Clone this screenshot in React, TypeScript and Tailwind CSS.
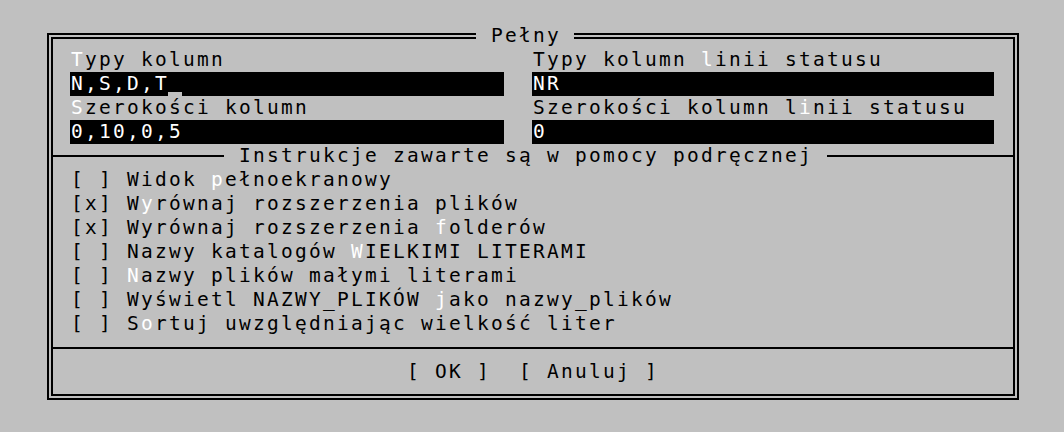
import React from "react";

const font = "font-['DejaVu_Sans_Mono',monospace] text-[19.5px] leading-[24px] tracking-[2.26px] whitespace-pre";

// "&x" marks the hotkey letter, drawn in white
function Hot({ t }: { t: string }) {
  const i = t.indexOf("&");
  if (i < 0) return <>{t}</>;
  return (
    <>
      {t.slice(0, i)}
      <span className="text-white">{t[i + 1]}</span>
      {t.slice(i + 2)}
    </>
  );
}

function Field({ value, cursor, w }: { value: string; cursor?: boolean; w: string }) {
  return (
    <div className={`flex h-[24px] bg-black text-white ${w}`}>
      <span className="pl-[1px]">{value}</span>
      {cursor && <span className="self-end -ml-[1px] w-[14px] h-[4px] bg-[#c0c0c0]" />}
    </div>
  );
}

const checks = [
  "[ ] Widok &pełnoekranowy",
  "[x] W&yrównaj rozszerzenia plików",
  "[x] Wyrównaj rozszerzenia &folderów",
  "[ ] Nazwy katalogów &WIELKIMI LITERAMI",
  "[ ] &Nazwy plików małymi literami",
  "[ ] Wyświetl NAZWY_PLIKÓW &jako nazwy_plików",
  "[ ] S&ortuj uwzględniając wielkość liter",
];

export default function App() {
  return (
    <div className={`relative w-[1064px] h-[432px] bg-[#c0c0c0] text-black pt-[33px] pl-[47px] ${font}`}>
      <div className="w-[972px] h-[367px] border-2 border-black p-[2px]">
        <div className="h-full border-2 border-black pt-[9px] flex flex-col">
          <div className="flex pl-[18px] gap-[28px] h-[24px]">
            <div className="w-[434px]"><Hot t="&Typy kolumn" /></div>
            <div><Hot t="Typy kolumn &linii statusu" /></div>
          </div>
          <div className="flex pl-[17px] gap-[28px]">
            <Field value="N,S,D,T" cursor w="w-[434px]" />
            <Field value="NR" w="w-[462px]" />
          </div>
          <div className="flex pl-[18px] gap-[28px] h-[24px]">
            <div className="w-[434px]"><Hot t="&Szerokości kolumn" /></div>
            <div><Hot t="Szerokości kolumn l&inii statusu" /></div>
          </div>
          <div className="flex pl-[17px] gap-[28px]">
            <Field value="0,10,0,5" w="w-[434px]" />
            <Field value="0" w="w-[462px]" />
          </div>

          <div className="flex items-center h-[24px]">
            <div className="w-[171px] h-[2px] bg-black" />
            <span className="pl-[1px]"> Instrukcje zawarte są w pomocy podręcznej </span>
            <div className="flex-1 h-[2px] bg-black" />
          </div>

          <div className="flex flex-col pl-[18px]">
            {checks.map((c) => (
              <div key={c} className="h-[24px]"><Hot t={c} /></div>
            ))}
          </div>

          <div className="flex items-center h-[24px]">
            <div className="flex-1 h-[2px] bg-black" />
          </div>

          <div className="h-[24px] pl-[354px]">{"[ OK ]  [ Anuluj ]"}</div>
        </div>
      </div>

      <div className="absolute left-[476px] top-[24px] h-[24px] w-[98px] pl-[15px] bg-[#c0c0c0]">Pełny</div>
    </div>
  );
}
